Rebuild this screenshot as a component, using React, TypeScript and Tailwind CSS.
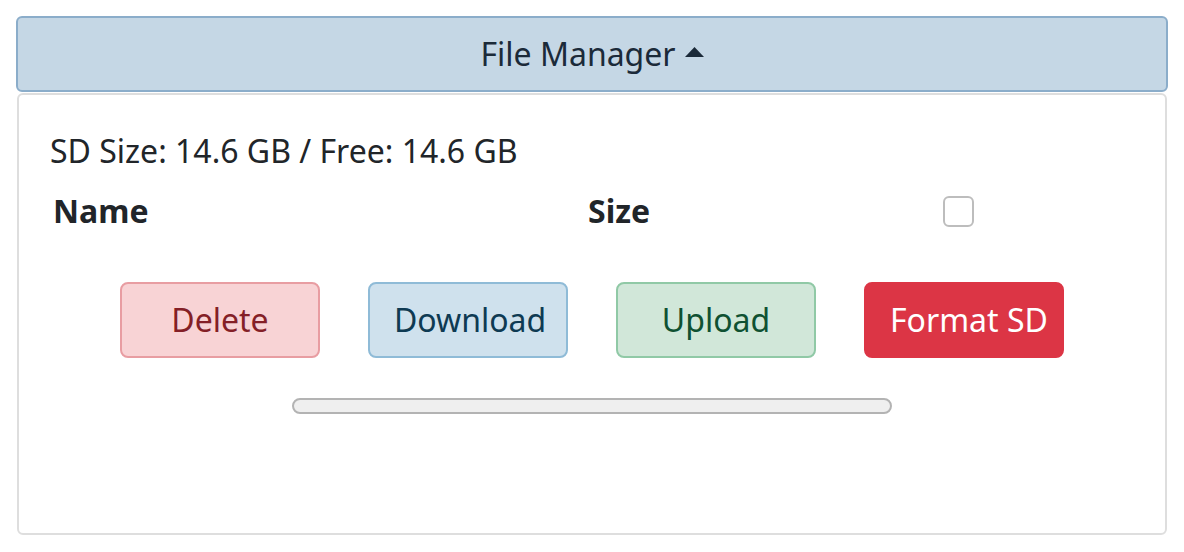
import { useState } from 'react';

const buttons = [
  {
    label: 'Delete',
    className: 'bg-[#f8d3d5] border-[#e89da2] text-[#841f27]',
  },
  {
    label: 'Download',
    className: 'bg-[#cfe1ed] border-[#8fbbd7] text-[#0e3a53]',
  },
  {
    label: 'Upload',
    className: 'bg-[#d1e7d9] border-[#90c9a6] text-[#0f5132]',
  },
  {
    label: 'Format SD',
    className: 'bg-[#dc3545] border-[#dc3545] text-white',
  },
];

export default function App() {
  const [open, setOpen] = useState(true);
  const [checked, setChecked] = useState(false);

  return (
    <div
      className="p-4 bg-white text-[#212529]"
      style={{ fontFamily: '"Noto Sans", "Open Sans", sans-serif' }}
    >
      <button
        onClick={() => setOpen(!open)}
        className="w-full h-[76px] flex items-center justify-center border-2 border-[#8badca] bg-[#c5d7e5] rounded-[6px] text-[32px] leading-[48px] text-[#1b2a39]"
      >
        <span>File Manager</span>
        <svg
          width="19"
          height="10"
          viewBox="0 0 19 10"
          className="ml-[9px] mb-[4px]"
        >
          <polygon points="0,10 9.5,0 19,10" fill="#1b2a39" />
        </svg>
      </button>

      <div className="mt-[1px] mx-[1px] h-[442px] border-2 border-[#dedede] rounded-[6px] pt-[32px] px-[31px]">
        <p className="text-[32px] leading-[48px]">SD Size: 14.6 GB / Free: 14.6 GB</p>

        <div className="mt-[12px] flex items-center pl-[3px] text-[32px] leading-[48px] font-bold">
          <div className="w-[535px]">Name</div>
          <div className="w-[355px]">Size</div>
          <button
            onClick={() => setChecked(!checked)}
            className={`w-[31px] h-[31px] rounded-[6px] border-2 ${
              checked ? 'bg-[#0d6efd] border-[#0d6efd]' : 'bg-white border-[#bdbdbd]'
            }`}
          />
        </div>

        <div className="mt-[47px] flex justify-center gap-12">
          {buttons.map((b) => (
            <div
              key={b.label}
              role="button"
              className={`block w-[200px] h-[76px] px-6 py-[12px] rounded-[8px] border-2 text-center whitespace-nowrap text-[32px] leading-[48px] cursor-pointer ${b.className}`}
            >
              {b.label}
            </div>
          ))}
        </div>

        <div className="mt-[40px] mx-auto w-[600px] h-[16px] rounded-full border-2 border-[#b3b3b3] bg-[#efefef]" />
      </div>
    </div>
  );
}
